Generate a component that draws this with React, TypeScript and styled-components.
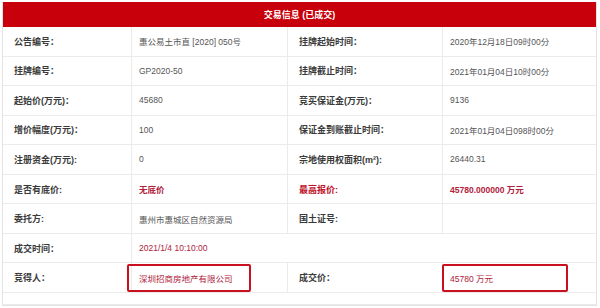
import React from 'react'
import styled, { createGlobalStyle, css } from 'styled-components'

const GlobalStyle = createGlobalStyle`
  html, body {
    margin: 0;
    padding: 0;
    background: #fff;
  }
  body {
    font-family: "Liberation Sans", "Noto Sans CJK SC", sans-serif;
    font-size: 9px;
  }
`

const Container = styled.div`
  width: 600px;
  height: 308px;
  padding: 2px 3px 0 2px;
  box-sizing: border-box;
  overflow: hidden;
`

const Table = styled.div`
  border: 1px solid #e3e3e3;
  border-top: none;
`

const Header = styled.div`
  height: 25px;
  display: flex;
  align-items: center;
  justify-content: center;
  background: #c7000b;
  color: #fff;
  font-weight: bold;
  font-size: 9px;
`

const Row = styled.div<{ $short?: boolean }>`
  display: grid;
  grid-template-columns: 129px 156px 155px 1fr;
  height: ${(p) => (p.$short ? '12px' : '29.55px')};
  border-bottom: 1px solid #ebebeb;
  box-sizing: border-box;
`

const Cell = styled.div<{ $span?: number; $last?: boolean; $label?: boolean }>`
  display: flex;
  align-items: center;
  padding-left: ${(p) => (p.$label ? '11px' : '7px')};
  border-right: ${(p) => (p.$last ? 'none' : '1px solid #ebebeb')};
  ${(p) =>
    p.$span &&
    css`
      grid-column: span ${p.$span};
    `}
  position: relative;
  white-space: nowrap;
`

const Label = styled.span<{ $red?: boolean }>`
  font-size: 9px;
  font-weight: bold;
  color: ${(p) => (p.$red ? '#c0102a' : '#3a3a3a')};
`

const Value = styled.span<{ $red?: boolean; $bold?: boolean }>`
  font-size: 8.5px;
  color: ${(p) => (p.$red ? '#b0213a' : '#555')};
  font-weight: ${(p) => (p.$bold ? 'bold' : 'normal')};
`

const Highlight = styled.div<{ $left: number; $w: number }>`
  position: absolute;
  left: ${(p) => p.$left}px;
  top: 1px;
  width: ${(p) => p.$w}px;
  height: 28px;
  border: 2px solid #c8101e;
  border-radius: 2px;
  box-sizing: border-box;
`

type Item = {
  label: string
  value?: string
  labelRed?: boolean
  valueRed?: boolean
  valueBold?: boolean
}

const rows: [Item, Item][] = [
  [
    { label: '公告编号：', value: '惠公易土市直 [2020] 050号' },
    { label: '挂牌起始时间：', value: '2020年12月18日09时00分' },
  ],
  [
    { label: '挂牌编号：', value: 'GP2020-50' },
    { label: '挂牌截止时间：', value: '2021年01月04日10时00分' },
  ],
  [
    { label: '起始价(万元)：', value: '45680' },
    { label: '竞买保证金(万元)：', value: '9136' },
  ],
  [
    { label: '增价幅度(万元)：', value: '100' },
    { label: '保证金到账截止时间：', value: '2021年01月04日098时00分' },
  ],
  [
    { label: '注册资金(万元):', value: '0' },
    { label: '宗地使用权面积(m²):', value: '26440.31' },
  ],
  [
    { label: '是否有底价:', value: '无底价', valueRed: true, valueBold: true },
    {
      label: '最高报价:',
      value: '45780.000000 万元',
      labelRed: true,
      valueRed: true,
      valueBold: true,
    },
  ],
  [
    { label: '委托方:', value: '惠州市惠城区自然资源局' },
    { label: '国土证号:' },
  ],
]

const Pair = ({ item, last }: { item: Item; last?: boolean }) => (
  <>
    <Cell $label>
      <Label $red={item.labelRed}>{item.label}</Label>
    </Cell>
    <Cell $last={last}>
      <Value $red={item.valueRed} $bold={item.valueBold}>
        {item.value}
      </Value>
    </Cell>
  </>
)

const App = () => (
  <Container>
    <GlobalStyle />
    <Table>
      <Header>交易信息 (已成交)</Header>
      {rows.map(([left, right]) => (
        <Row key={left.label}>
          <Pair item={left} />
          <Pair item={right} last />
        </Row>
      ))}
      <Row>
        <Cell $label>
          <Label>成交时间：</Label>
        </Cell>
        <Cell $span={3} $last>
          <Value $red>2021/1/4 10:10:00</Value>
        </Cell>
      </Row>
      <Row>
        <Cell $label>
          <Label>竞得人：</Label>
        </Cell>
        <Cell>
          <Highlight $left={-5} $w={124} />
          <Value $red>深圳招商房地产有限公司</Value>
        </Cell>
        <Cell $label>
          <Label>成交价：</Label>
        </Cell>
        <Cell $last>
          <Highlight $left={-1} $w={126} />
          <Value $red>45780 万元</Value>
        </Cell>
      </Row>
      <Row $short>
        <Cell $span={4} $last />
      </Row>
    </Table>
  </Container>
)

export default App
